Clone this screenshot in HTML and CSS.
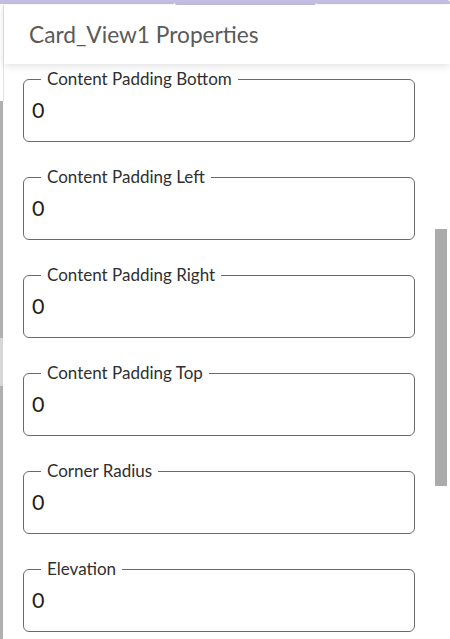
FILE: index.html
```html
<!DOCTYPE html>
<html>
<head>
<meta charset="utf-8">
<link rel="stylesheet" href="styles.css">
</head>
<body>
<div class="page">
  <div class="topbar">
    <div class="seg seg-left"></div>
    <div class="seg seg-mid"></div>
    <div class="seg seg-right"></div>
  </div>
  <div class="main">
    <div class="rail">
      <div class="rail-top"></div>
      <div class="rail-dark rail-a"></div>
      <div class="rail-light"></div>
      <div class="rail-dark rail-b"></div>
    </div>
    <div class="panel">
      <div class="header"><h1 class="title">Card_View1 Properties</h1></div>
      <div class="body">
        <div class="fields">
          <fieldset class="field"><legend class="label">Content Padding Bottom</legend><div class="value">0</div></fieldset>
          <fieldset class="field"><legend class="label">Content Padding Left</legend><div class="value">0</div></fieldset>
          <fieldset class="field"><legend class="label">Content Padding Right</legend><div class="value">0</div></fieldset>
          <fieldset class="field"><legend class="label">Content Padding Top</legend><div class="value">0</div></fieldset>
          <fieldset class="field"><legend class="label">Corner Radius</legend><div class="value">0</div></fieldset>
          <fieldset class="field"><legend class="label">Elevation</legend><div class="value">0</div></fieldset>
        </div>
        <div class="track"><div class="thumb"></div></div>
      </div>
    </div>
  </div>
</div>
</body>
</html>
```

FILE: styles.css
```css
* { box-sizing: border-box; }
html, body { margin: 0; padding: 0; background: #fff; }
body { width: 450px; height: 639px; overflow: hidden; font-family: Lato, "Open Sans", sans-serif; }

.page { display: flex; flex-direction: column; height: 639px; }

.topbar { display: flex; height: 5px; flex: none; align-items: flex-start; }
.seg { background: #c5bfe3; }
.seg-left { width: 175px; height: 4px; margin-top: 0; border-bottom-right-radius: 2px; }
.seg-mid { width: 141px; height: 5px; border-radius: 0 0 2px 2px; }
.seg-right { flex: 1; height: 4px; border-bottom-left-radius: 2px; border-top-right-radius: 3px; }

.main { flex: 1; display: flex; min-height: 0; }

.rail { width: 4px; flex: none; display: flex; flex-direction: column; }
.rail-top { height: 96px; border-right: 1px solid #e3e3e3; }
.rail-dark { background: #b0b0b0; width: 3px; }
.rail-a { height: 237px; }
.rail-light { height: 48px; background: #d6d6d6; width: 3px; }
.rail-b { flex: 1; }

.panel { flex: 1; display: flex; flex-direction: column; min-width: 0; }

.header {
  height: 59px; flex: none; display: flex; align-items: center;
  padding-left: 25px; background: #fff;
  box-shadow: 0 2px 8px rgba(0,0,0,0.12);
  position: relative; z-index: 1;
}
.title { margin: 0; font-size: 22.7px; font-weight: 400; color: #5a5a5a; letter-spacing: 0; }

.body { flex: 1; display: flex; min-height: 0; overflow: hidden; }
.fields { flex: 1; display: flex; flex-direction: column; gap: 25px; padding: 5px 0 0 19px; }

.field {
  margin: 0; width: 392px; height: 73px; flex: none;
  border: 1px solid #6a6a6a; border-radius: 6px;
  padding: 0 8px;
}
.label {
  margin-left: 9px; padding: 0 6px;
  font-size: 17px; color: #2f2f2f; line-height: 20px;
}
.value { font-size: 21.5px; color: #1e1e1e; line-height: 24px; padding-top: 9px; }

.track { width: 12px; flex: none; margin: 0 3px 0 20px; }
.thumb { margin-top: 165px; height: 257px; background: #ababab; }
```
